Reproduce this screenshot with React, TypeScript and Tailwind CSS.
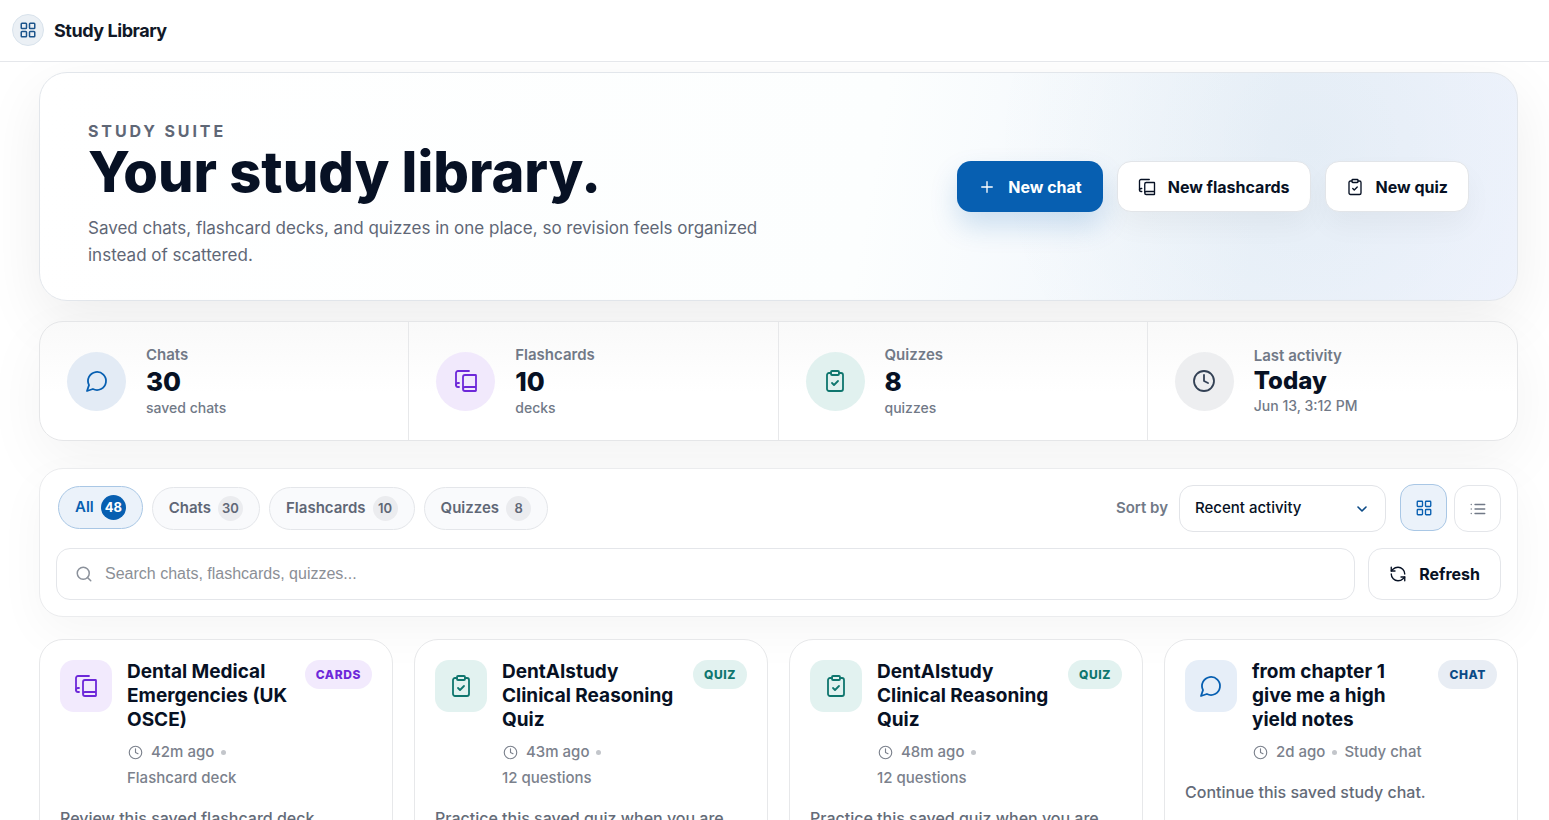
import { useState } from "react";
import type { ReactNode } from "react";
import clsx from "clsx";
import { ChevronDown, ClipboardCheck, LayoutGrid, Plus, RefreshCcw, Search } from "lucide-react";

type Kind = "chat" | "cards" | "quiz";

interface IconProps {
  className?: string;
  strokeWidth?: number;
}

interface LibraryItem {
  kind: Kind;
  title: string;
  age: string;
  detail: string;
  description: string;
}

const Icon = ({ className, strokeWidth = 2, children }: IconProps & { children: ReactNode }) => (
  <svg
    viewBox="0 0 24 24"
    fill="none"
    stroke="currentColor"
    strokeWidth={strokeWidth}
    strokeLinecap="round"
    strokeLinejoin="round"
    className={className}
    aria-hidden="true"
  >
    {children}
  </svg>
);

const ChatIcon = (props: IconProps) => (
  <Icon {...props}>
    <path d="M7.9 20A9 9 0 1 0 4 16.1L2 22Z" />
  </Icon>
);

const CardsIcon = (props: IconProps) => (
  <Icon {...props}>
    <path d="M2 16V4a2 2 0 0 1 2-2h11" />
    <path d="M22 18H11a2 2 0 1 0 0 4h10.5a.5.5 0 0 0 .5-.5v-15a.5.5 0 0 0-.5-.5H11a2 2 0 0 0-2 2v12" />
    <path d="M5 14H4a2 2 0 1 0 0 4h1" />
  </Icon>
);

const ClockIcon = (props: IconProps) => (
  <Icon {...props}>
    <circle cx="12" cy="12" r="10" />
    <path d="M12 6v6l4 2" />
  </Icon>
);

const ListIcon = (props: IconProps) => (
  <Icon {...props}>
    <path d="M8 6h13M8 12h13M8 18h13M3 6h.01M3 12h.01M3 18h.01" />
  </Icon>
);

const kinds = {
  chat: { label: "CHAT", icon: ChatIcon, tile: "bg-[#e6eef8] text-[#075fb1]", badge: "bg-[#e8edf4] text-[#0b4a86]" },
  cards: { label: "CARDS", icon: CardsIcon, tile: "bg-[#f2eafd] text-[#6d28d9]", badge: "bg-[#f2eafd] text-[#6d28d9]" },
  quiz: { label: "QUIZ", icon: ClipboardCheck, tile: "bg-[#e2f2f0] text-[#0f766e]", badge: "bg-[#e2f2f0] text-[#0f766e]" },
};

const stats = [
  { label: "Chats", value: "30", note: "saved chats", icon: ChatIcon, tone: "bg-[#e3ebf5] text-[#075fb1]" },
  { label: "Flashcards", value: "10", note: "decks", icon: CardsIcon, tone: "bg-[#f1e9fc] text-[#6d28d9]" },
  { label: "Quizzes", value: "8", note: "quizzes", icon: ClipboardCheck, tone: "bg-[#e1f1ef] text-[#0f766e]" },
  { label: "Last activity", value: "Today", note: "Jun 13, 3:12 PM", icon: ClockIcon, tone: "bg-[#edeef0] text-[#334155]", compact: true },
];

const filters = [
  { name: "All", count: 48 },
  { name: "Chats", count: 30 },
  { name: "Flashcards", count: 10 },
  { name: "Quizzes", count: 8 },
];

const items: LibraryItem[] = [
  {
    kind: "cards",
    title: "Dental Medical Emergencies (UK OSCE)",
    age: "42m ago",
    detail: "Flashcard deck",
    description: "Review this saved flashcard deck",
  },
  {
    kind: "quiz",
    title: "DentAIstudy Clinical Reasoning Quiz",
    age: "43m ago",
    detail: "12 questions",
    description: "Practice this saved quiz when you are",
  },
  {
    kind: "quiz",
    title: "DentAIstudy Clinical Reasoning Quiz",
    age: "48m ago",
    detail: "12 questions",
    description: "Practice this saved quiz when you are",
  },
  {
    kind: "chat",
    title: "from chapter 1 give me a high yield notes",
    age: "2d ago",
    detail: "Study chat",
    description: "Continue this saved study chat.",
  },
];

const ItemCard = ({ item }: { item: LibraryItem }) => {
  const kind = kinds[item.kind];
  const KindIcon = kind.icon;

  return (
    <article className="min-h-[260px] rounded-3xl border border-[#e7e8ea] bg-white p-5">
      <div className="flex items-start">
        <span className={clsx("flex size-[52px] shrink-0 items-center justify-center rounded-[14px]", kind.tile)}>
          <KindIcon className="size-6" strokeWidth={1.8} />
        </span>
        <div className="ml-[15px] min-w-0 flex-1">
          <h2 className="text-[19px] leading-6 font-bold text-[#071124]">{item.title}</h2>
          <div className="mt-[7px] flex flex-wrap items-center gap-x-[7px] text-[15px] leading-[26px] font-medium text-[#7b818c]">
            <ClockIcon className="mx-px size-[15px]" strokeWidth={1.8} />
            <span>{item.age}</span>
            <span className="size-[5px] rounded-full bg-[#c3c6cb]" />
            <span>{item.detail}</span>
          </div>
        </div>
        <span
          className={clsx(
            "ml-2.5 flex h-[29px] shrink-0 items-center rounded-full px-[11px] text-xs font-extrabold tracking-wider",
            kind.badge,
          )}
        >
          {kind.label}
        </span>
      </div>
      <p className="mt-3.5 text-base leading-[26px] font-medium text-[#646b78]">{item.description}</p>
    </article>
  );
};

export default function App() {
  const [filter, setFilter] = useState("All");
  const [view, setView] = useState<"grid" | "list">("grid");
  const [query, setQuery] = useState("");

  return (
    <div className="flex h-screen flex-col overflow-hidden bg-white font-['Inter',sans-serif] text-[#071124]">
      <header className="z-10 flex shrink-0 items-center gap-2.5 border-b border-[#e5e7eb] bg-white px-3 pt-3.5 pb-[15px]">
        <span className="flex size-8 items-center justify-center rounded-full border border-[#d9e3ec] bg-[#ebf0f5] text-[#1d558c]">
          <LayoutGrid className="size-[18px]" strokeWidth={2} />
        </span>
        <span className="pt-0.5 text-lg leading-[30px] font-bold tracking-tight text-[#111827]">Study Library</span>
      </header>

      <main className="min-h-0 flex-1 overflow-y-auto pt-2.5 pr-[31px] pb-8 pl-[39px] [scrollbar-width:none]">
        <section className="flex items-center justify-between rounded-[28px] border border-[#e2e6eb] bg-[radial-gradient(circle_at_86%_32%,rgba(4,80,120,0.045),transparent_320px),linear-gradient(100deg,#ffffff_0%,#fcfefe_56%,#eef4fb_82%,#f0f4fd_100%)] px-12 py-[31px] shadow-[0_20px_60px_rgba(0,0,0,0.07)]">
          <div className="max-w-[700px] pt-[17px]">
            <p className="text-base leading-5 font-bold tracking-[0.18em] text-[#5f6776]">STUDY SUITE</p>
            <h1 className="mt-[3px] text-[56px] leading-[56px] font-extrabold">Your study library.</h1>
            <p className="mt-[15px] text-[17px] leading-[27px] text-[#5f6776]">
              Saved chats, flashcard decks, and quizzes in one place, so revision feels organized instead of scattered.
            </p>
          </div>
          <div className="flex shrink-0 gap-3.5 text-base font-bold">
            <button className="flex h-[51px] items-center gap-3 rounded-[14px] bg-[#075fb1] px-[21px] text-white shadow-[0_14px_28px_rgba(7,95,177,0.18)]">
              <Plus className="size-[18px]" strokeWidth={1.8} />
              New chat
            </button>
            <button className="flex h-[51px] items-center gap-3 rounded-[14px] border border-[#e2e5e9] bg-white px-5 shadow-[0_14px_28px_rgba(0,0,0,0.04)]">
              <CardsIcon className="size-[18px]" strokeWidth={1.8} />
              New flashcards
            </button>
            <button className="flex h-[51px] items-center gap-3 rounded-[14px] border border-[#e2e5e9] bg-white px-5 shadow-[0_14px_28px_rgba(0,0,0,0.04)]">
              <ClipboardCheck className="size-[18px]" strokeWidth={1.8} />
              New quiz
            </button>
          </div>
        </section>

        <section className="mt-5 grid h-[120px] grid-cols-4 divide-x divide-[#e7e8ea] rounded-3xl border border-[#e5e6e8] bg-linear-to-b from-[#f9f9f9] to-white to-60% shadow-[0_20px_60px_rgba(0,0,0,0.05)]">
          {stats.map(({ label, value, note, icon: StatIcon, tone, compact }) => (
            <div key={label} className="flex items-center gap-5 px-[27px]">
              <span className={clsx("flex size-[59px] shrink-0 items-center justify-center rounded-full", tone)}>
                <StatIcon className="size-6" strokeWidth={1.8} />
              </span>
              <div className="font-medium text-[#717987]">
                <p className="text-[15px] leading-5 font-semibold">{label}</p>
                <p className={clsx("font-extrabold text-[#071124]", compact ? "text-2xl leading-[30px]" : "text-[26px] leading-[33px]")}>
                  {value}
                </p>
                <p className="text-sm leading-5">{note}</p>
              </div>
            </div>
          ))}
        </section>

        <section className="mt-[27px] rounded-3xl border border-[#ebecee] bg-white p-4 shadow-[0_16px_48px_rgba(0,0,0,0.04)]">
          <div className="flex items-center justify-between">
            <div className="flex gap-[9px] px-0.5">
              {filters.map(({ name, count }) => {
                const active = filter === name;
                return (
                  <button
                    key={name}
                    onClick={() => setFilter(name)}
                    aria-pressed={active}
                    className={clsx(
                      "flex h-[43px] items-center gap-[7px] rounded-full border px-4 text-[15px] font-semibold",
                      active
                        ? "-translate-y-px border-[#a9c7e5] bg-[#ebf2fa] text-[#075fb1]"
                        : "border-[#e4e6ea] bg-[#f9fafc] text-[#5f6776]",
                    )}
                  >
                    {name}
                    <span
                      className={clsx(
                        "flex size-[25px] items-center justify-center rounded-full text-[13px]",
                        active ? "bg-[#075fb1] font-bold text-white" : "bg-[#ebecef]",
                      )}
                    >
                      {count}
                    </span>
                  </button>
                );
              })}
            </div>

            <div className="flex items-center">
              <label htmlFor="sort" className="mr-[11px] text-[15px] font-semibold text-[#717987]">
                Sort by
              </label>
              <div className="relative mr-3.5">
                <select
                  id="sort"
                  className="h-[47px] w-[207px] appearance-none rounded-[14px] border border-[#e2e4e8] bg-white pr-10 pl-[15px] text-[15px] font-medium"
                >
                  <option>Recent activity</option>
                </select>
                <ChevronDown className="pointer-events-none absolute top-4 right-4 size-4 text-[#0b4a86]" strokeWidth={2.4} />
              </div>
              <div className="flex gap-[7px]">
                <button
                  aria-label="Grid view"
                  onClick={() => setView("grid")}
                  className={clsx(
                    "flex size-[47px] items-center justify-center rounded-[14px] border",
                    view === "grid" ? "-translate-y-px border-[#a9c7e5] bg-[#ebf2fa] text-[#075fb1]" : "border-[#e4e6ea] text-[#717987]",
                  )}
                >
                  <LayoutGrid className="size-[18px]" strokeWidth={1.8} />
                </button>
                <button
                  aria-label="List view"
                  onClick={() => setView("list")}
                  className={clsx(
                    "flex size-[47px] items-center justify-center rounded-[14px] border",
                    view === "list" ? "-translate-y-px border-[#a9c7e5] bg-[#ebf2fa] text-[#075fb1]" : "border-[#e4e6ea] text-[#717987]",
                  )}
                >
                  <ListIcon className="size-[18px]" strokeWidth={1.8} />
                </button>
              </div>
            </div>
          </div>

          <div className="mt-4 flex gap-[13px]">
            <label className="flex h-[52px] flex-1 items-center gap-3 rounded-[14px] border border-[#e4e6ea] bg-white px-[18px]">
              <Search className="size-[18px] text-[#8b919b]" strokeWidth={2} />
              <input
                type="text"
                aria-label="Search library"
                value={query}
                onChange={(e) => setQuery(e.target.value)}
                placeholder="Search chats, flashcards, quizzes..."
                className="min-w-0 flex-1 bg-transparent font-['Liberation_Sans',sans-serif] text-base outline-none placeholder:text-[#8b8f96]"
              />
            </label>
            <button className="flex h-[52px] items-center gap-3 rounded-[14px] border border-[#e4e6ea] bg-white px-5 text-base font-bold">
              <RefreshCcw className="size-[18px]" strokeWidth={1.8} />
              Refresh
            </button>
          </div>
        </section>

        <section className={clsx("mt-[22px] grid gap-[21px]", view === "grid" ? "grid-cols-4" : "grid-cols-1")}>
          {items.map((item) => (
            <ItemCard key={item.title + item.age} item={item} />
          ))}
        </section>
      </main>
    </div>
  );
}
